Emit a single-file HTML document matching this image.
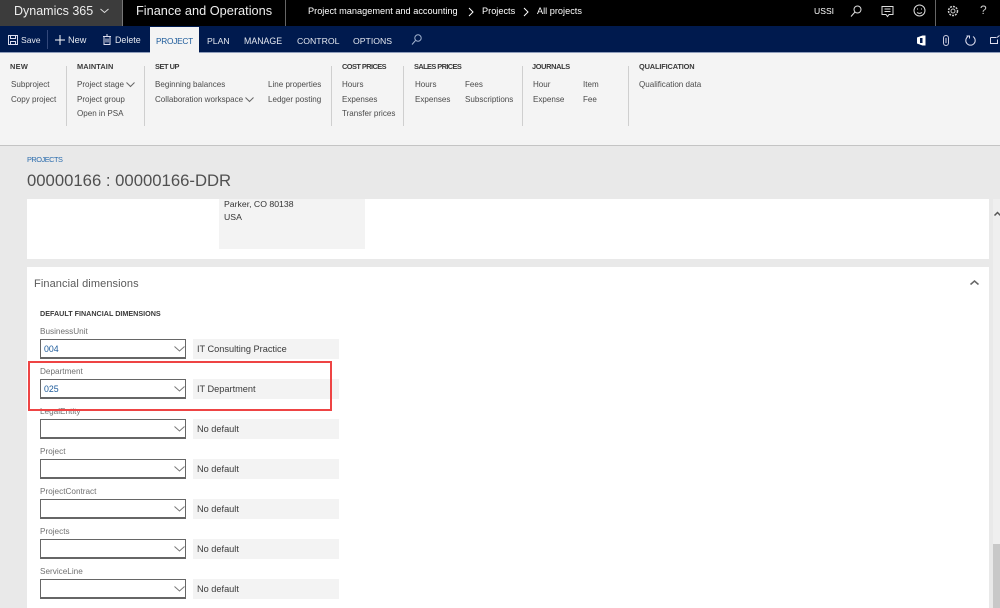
<!DOCTYPE html>
<html><head><meta charset="utf-8"><style>
html,body{margin:0;padding:0;width:1000px;height:608px;overflow:hidden;background:#e9e9e9;font-family:"Liberation Sans",sans-serif}
#r{position:relative;width:1000px;height:608px;overflow:hidden;filter:blur(.35px)}
.b{position:absolute}
.t{position:absolute;white-space:nowrap;line-height:14px;height:14px}
.g{font-size:8.05px;color:#4a4a4a}
.h{font-size:7.4px;color:#3a3a3a;font-weight:bold}
.w{color:#fff}
.l{font-size:8.2px;color:#707070}
.v{font-size:9.2px;color:#3a3a3a}
.c{position:absolute;left:40px;width:144px;height:17px;border:1px solid #666;border-bottom-width:2px;background:#fff}
.d{position:absolute;left:193px;width:146px;height:20px;background:#f3f3f3}
.sep{position:absolute;top:66px;width:1px;height:60px;background:#cfcfcf}
svg{position:absolute;overflow:visible;fill:none}
</style></head><body><div id="r">
<div class="b" style="left:0;top:0;width:1000px;height:26px;background:#000"></div>
<div class="b" style="left:0;top:0;width:122px;height:26px;background:#3c3c3c"></div>
<div class="b" style="left:122px;top:0;width:1px;height:26px;background:#777"></div>
<div class="b" style="left:285px;top:0;width:1px;height:26px;background:#666"></div>
<div class="b" style="left:935px;top:0;width:1px;height:26px;background:#666"></div>
<div class="t w" style="left:14px;top:4px;font-size:12.5px;color:#eee">Dynamics 365</div>
<svg style="left:100px;top:8px" width="9" height="6"><path d="M.5 1l4 3.500 4-3.500" stroke="#ddd"/></svg>
<div class="t w" style="left:136px;top:4px;font-size:12.75px;color:#eee">Finance and Operations</div>
<div class="t w" style="left:308px;top:4px;font-size:9.2px">Project management and accounting</div>
<svg style="left:468px;top:7px" width="6" height="10"><path d="M1 1l4 4-4 4" stroke="#fff"/></svg>
<div class="t w" style="left:482px;top:4px;font-size:9.2px">Projects</div>
<svg style="left:523px;top:7px" width="6" height="10"><path d="M1 1l4 4-4 4" stroke="#fff"/></svg>
<div class="t w" style="left:537px;top:4px;font-size:9.2px">All projects</div>
<div class="t w" style="left:814px;top:4px;font-size:8.600px">USSI</div>
<svg style="left:850px;top:5px" width="12" height="12" stroke="#ddd"><circle cx="7.500" cy="4.500" r="3.500"/><path d="M5 7l-4 4.500"/></svg>
<svg style="left:881px;top:6px" width="13" height="12" stroke="#ddd"><path d="M1 .5h11v8H8L6.500 10.500 5 8.500H1z"/><path d="M3.500 3h6M3.500 5.500h6"/></svg>
<svg style="left:913px;top:4px" width="13" height="13" stroke="#ddd"><circle cx="6.500" cy="6.500" r="5.500"/><path d="M4 8.500c1.500 1 3.500 1 5 0M4.500 4.500v1M8.500 4.500v1"/></svg>
<svg style="left:947px;top:5px" width="12" height="12" stroke="#ccc"><circle cx="6" cy="6" r="2"/><circle cx="6" cy="6" r="4.500" stroke-width="1.500" stroke-dasharray="2 1"/></svg>
<div class="t w" style="left:980px;top:3px;font-size:12px;color:#ccc">?</div>

<div class="b" style="left:0;top:26px;width:1000px;height:26px;background:#001a4e"></div>
<div class="b" style="left:150px;top:27px;width:49px;height:26px;background:#f4f4f4"></div>
<svg style="left:8px;top:35px" width="10" height="10" stroke="#dde"><path d="M.5.5h9v9h-9zM2.500.5v3h5v-3M2.500 9.500v-3h5v3"/></svg>
<div class="t w" style="left:21px;top:33px;font-size:8.600px;color:#e4e8f0">Save</div>
<div class="b" style="left:47px;top:30px;width:1px;height:19px;background:#33487a"></div>
<svg style="left:55px;top:35px" width="10" height="10" stroke="#fff"><path d="M5 0v10M0 5h10"/></svg>
<div class="t w" style="left:68px;top:33px;font-size:9.200px;color:#e4e8f0">New</div>
<svg style="left:103px;top:35px" width="8" height="10" stroke="#dde"><path d="M0 1.500h8M1 1.500v8h6v-8M3 0h2M3 3.500v4M5 3.500v4"/></svg>
<div class="t w" style="left:115px;top:33px;font-size:8.900px;color:#e4e8f0">Delete</div>
<div class="t" style="left:156px;top:34px;font-size:8.300px;letter-spacing:-.25px;color:#1c5a9a">PROJECT</div>
<div class="t w" style="left:207px;top:34px;font-size:8.700px;color:#e4e8f0">PLAN</div>
<div class="t w" style="left:244px;top:34px;font-size:8.800px;color:#e4e8f0">MANAGE</div>
<div class="t w" style="left:297px;top:34px;font-size:8.700px;color:#e4e8f0">CONTROL</div>
<div class="t w" style="left:353px;top:34px;font-size:8.700px;color:#e4e8f0">OPTIONS</div>
<svg style="left:411px;top:34px" width="11" height="11" stroke="#9fb0cc"><circle cx="7" cy="4" r="3.200"/><path d="M4.500 6.500L1 10.500"/></svg>
<svg style="left:917px;top:35px" width="9" height="11"><path d="M0 2.500L5.500.5h3v10h-3L0 8.500z" fill="#fff"/><path d="M3 3v5h2.500V3z" fill="#001a4e"/></svg>
<svg style="left:943px;top:35px" width="6" height="11" stroke="#ccd"><rect x=".5" y=".5" width="5" height="10" rx="2.500"/><path d="M3 3v5"/></svg>
<svg style="left:965px;top:35px" width="11" height="11" stroke="#dde"><path d="M3 1.500a4.700 4.700 0 1 0 5 0M1.500 1h3v2.500"/></svg>
<svg style="left:990px;top:35px" width="10" height="10" stroke="#dde"><path d="M.5 2.500h6M.5 2.500v6h7V4.500M7 2.500L9.500 .5"/></svg>

<div class="b" style="left:0;top:52px;width:1000px;height:93px;background:#f4f4f4"></div>
<div class="b" style="left:199px;top:52px;width:801px;height:1px;background:#8f9dbb"></div>
<div class="b" style="left:0;top:52px;width:150px;height:1px;background:#8f9dbb"></div>
<div class="b" style="left:0;top:145px;width:1000px;height:1px;background:#c4c4c4"></div>
<div class="sep" style="left:66px"></div><div class="sep" style="left:144px"></div><div class="sep" style="left:331px"></div><div class="sep" style="left:403px"></div><div class="sep" style="left:522px"></div><div class="sep" style="left:628px"></div>

<div class="t h" style="left:10px;top:60px;letter-spacing:.3px">NEW</div>
<div class="t g" style="left:11px;top:78px">Subproject</div>
<div class="t g" style="left:11px;top:93px">Copy project</div>
<div class="t h" style="left:77px;top:60px;letter-spacing:.1px">MAINTAIN</div>
<div class="t g" style="left:77px;top:78px">Project stage</div>
<svg style="left:126px;top:82px" width="9" height="6" stroke="#666"><path d="M.5.500L4.500 4.500 8.500.5"/></svg>
<div class="t g" style="left:77px;top:93px">Project group</div>
<div class="t g" style="left:77px;top:107px">Open in PSA</div>
<div class="t h" style="left:155px;top:60px;letter-spacing:-.45px">SET UP</div>
<div class="t g" style="left:155px;top:78px">Beginning balances</div>
<div class="t g" style="left:155px;top:93px">Collaboration workspace</div>
<svg style="left:245px;top:97px" width="9" height="6" stroke="#666"><path d="M.5.500L4.500 4.500 8.500.5"/></svg>
<div class="t g" style="left:268px;top:78px">Line properties</div>
<div class="t g" style="left:268px;top:93px">Ledger posting</div>
<div class="t h" style="left:342px;top:60px;letter-spacing:-.55px">COST PRICES</div>
<div class="t g" style="left:342px;top:78px">Hours</div>
<div class="t g" style="left:342px;top:93px">Expenses</div>
<div class="t g" style="left:342px;top:107px">Transfer prices</div>
<div class="t h" style="left:414px;top:60px;letter-spacing:-.58px">SALES PRICES</div>
<div class="t g" style="left:415px;top:78px">Hours</div>
<div class="t g" style="left:415px;top:93px">Expenses</div>
<div class="t g" style="left:465px;top:78px">Fees</div>
<div class="t g" style="left:465px;top:93px">Subscriptions</div>
<div class="t h" style="left:532px;top:60px;letter-spacing:-.35px">JOURNALS</div>
<div class="t g" style="left:533px;top:78px">Hour</div>
<div class="t g" style="left:533px;top:93px">Expense</div>
<div class="t g" style="left:583px;top:78px">Item</div>
<div class="t g" style="left:583px;top:93px">Fee</div>
<div class="t h" style="left:639px;top:60px;letter-spacing:-.15px">QUALIFICATION</div>
<div class="t g" style="left:639px;top:78px">Qualification data</div>

<div class="t" style="left:27px;top:153px;font-size:7.400px;letter-spacing:-.5px;color:#2b6cad">PROJECTS</div>
<div class="t" style="left:27px;top:173px;font-size:16.700px;line-height:16px;height:16px;color:#505050">00000166 : 00000166-DDR</div>

<div class="b" style="left:27px;top:199px;width:962px;height:60px;background:#fff"></div>
<div class="b" style="left:219px;top:199px;width:146px;height:50px;background:#f3f3f3"></div>
<div class="t" style="left:224px;top:197px;font-size:8.700px;color:#333">Parker, CO 80138</div>
<div class="t" style="left:224px;top:210px;font-size:8.700px;color:#333">USA</div>
<div class="b" style="left:27px;top:267px;width:962px;height:341px;background:#fff"></div>
<div class="b" style="left:993px;top:199px;width:7px;height:409px;background:#efefef"></div>
<div class="b" style="left:993px;top:544px;width:7px;height:64px;background:#c8c8c8"></div>
<svg style="left:994px;top:211px" width="7" height="6" stroke="#555" stroke-width="1.500"><path d="M.5 4.500L3.500 1.500 6.500 4.500"/></svg>
<svg style="left:970px;top:280px" width="9" height="6" stroke="#666" stroke-width="1.500"><path d="M.5 4.500L4.500 1 8.500 4.500"/></svg>
<div class="t" style="left:34px;top:277px;font-size:11px;letter-spacing:.1px;color:#5a5a5a">Financial dimensions</div>
<div class="t h" style="left:40px;top:307px;font-size:7.200px">DEFAULT FINANCIAL DIMENSIONS</div>

<div class="t l" style="left:40px;top:325px">BusinessUnit</div>
<div class="c" style="top:339px"></div><div class="d" style="top:339px"></div>
<div class="t v" style="left:44px;top:342px;font-size:8.800px;color:#1c5a9a">004</div>
<div class="t v" style="left:197px;top:342px">IT Consulting Practice</div>
<svg style="left:174px;top:346px" width="11" height="7" stroke="#777"><path d="M.5.500L5.500 5 10.500.5"/></svg>

<div class="t l" style="left:40px;top:365px">Department</div>
<div class="c" style="top:379px"></div><div class="d" style="top:379px"></div>
<div class="t v" style="left:44px;top:382px;font-size:8.800px;color:#1c5a9a">025</div>
<div class="t v" style="left:197px;top:382px">IT Department</div>
<svg style="left:174px;top:386px" width="11" height="7" stroke="#777"><path d="M.5.500L5.500 5 10.500.5"/></svg>

<div class="t l" style="left:40px;top:405px">LegalEntity</div>
<div class="c" style="top:419px"></div><div class="d" style="top:419px"></div>
<div class="t v" style="left:197px;top:422px">No default</div>
<svg style="left:174px;top:426px" width="11" height="7" stroke="#777"><path d="M.5.500L5.500 5 10.500.5"/></svg>

<div class="t l" style="left:40px;top:445px">Project</div>
<div class="c" style="top:459px"></div><div class="d" style="top:459px"></div>
<div class="t v" style="left:197px;top:462px">No default</div>
<svg style="left:174px;top:466px" width="11" height="7" stroke="#777"><path d="M.5.500L5.500 5 10.500.5"/></svg>

<div class="t l" style="left:40px;top:485px">ProjectContract</div>
<div class="c" style="top:499px"></div><div class="d" style="top:499px"></div>
<div class="t v" style="left:197px;top:502px">No default</div>
<svg style="left:174px;top:506px" width="11" height="7" stroke="#777"><path d="M.5.500L5.500 5 10.500.5"/></svg>

<div class="t l" style="left:40px;top:525px">Projects</div>
<div class="c" style="top:539px"></div><div class="d" style="top:539px"></div>
<div class="t v" style="left:197px;top:542px">No default</div>
<svg style="left:174px;top:546px" width="11" height="7" stroke="#777"><path d="M.5.500L5.500 5 10.500.5"/></svg>

<div class="t l" style="left:40px;top:565px">ServiceLine</div>
<div class="c" style="top:579px"></div><div class="d" style="top:579px"></div>
<div class="t v" style="left:197px;top:582px">No default</div>
<svg style="left:174px;top:586px" width="11" height="7" stroke="#777"><path d="M.5.500L5.500 5 10.500.5"/></svg>

<div class="b" style="left:28px;top:361px;width:300px;height:46px;border:2px solid #ee4444"></div>
</div></body></html>
